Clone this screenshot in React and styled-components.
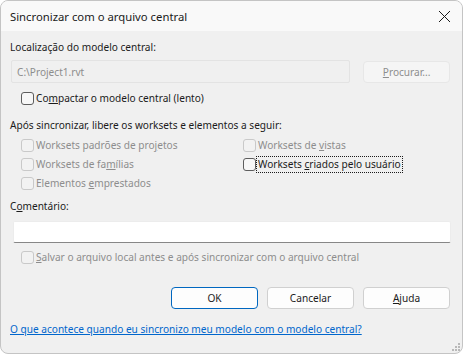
import React from 'react';
import styled, { createGlobalStyle } from 'styled-components';

const GlobalStyle = createGlobalStyle`
  html, body {
    margin: 0;
    padding: 0;
    background: #ffffff;
  }
  body {
    font-family: "Noto Sans", "Liberation Sans", sans-serif;
    font-size: 10.1px;
    color: #1b1b1b;
  }
`;

const Window = styled.div`
  box-sizing: border-box;
  width: 463px;
  height: 354px;
  border: 1px solid #c4c4c4;
  border-radius: 8px;
  overflow: hidden;
  background: #f0f0f0;
  display: flex;
  flex-direction: column;
  position: relative;
`;

const TitleBar = styled.div`
  height: 30px;
  background: #f9f9f9;
  display: flex;
  align-items: center;
  justify-content: space-between;
  padding: 0 9px 0 9px;
  flex-shrink: 0;
`;

const Title = styled.span`
  font-size: 11.3px;
  color: #1b1b1b;
`;

const CloseButton = styled.div`
  width: 16px;
  height: 16px;
  display: flex;
  align-items: center;
  justify-content: center;
  margin-right: 1px;
`;

const Body = styled.div`
  flex: 1;
  display: flex;
  flex-direction: column;
  padding: 9px 12px 0 9px;
`;

const Label = styled.div`
  line-height: 15px;
  color: ${p => (p.$disabled ? '#8d8d8d' : '#1b1b1b')};
  margin-top: ${p => p.$top || 0}px;
`;

const PathRow = styled.div`
  display: flex;
  align-items: center;
  gap: 13px;
  margin-top: 5px;
`;

const PathInput = styled.div`
  box-sizing: border-box;
  width: 340px;
  height: 23px;
  margin-left: 1px;
  border: 1px solid #e3e3e3;
  border-radius: 2px;
  background: #f0f0f0;
  color: #8d8d8d;
  display: flex;
  align-items: center;
  padding-left: 5px;
`;

const Button = styled.button`
  box-sizing: border-box;
  width: 87px;
  height: 22px;
  border-radius: 4px;
  border: 1px solid ${p => (p.$primary ? '#0067c0' : p.$disabled ? '#e7e7e7' : '#d0d0d0')};
  background: ${p => (p.$disabled ? '#f5f5f5' : '#fdfdfd')};
  color: ${p => (p.$disabled ? '#8d8d8d' : '#1b1b1b')};
  font-family: inherit;
  font-size: 10.1px;
  padding: 0;
  display: flex;
  align-items: center;
  justify-content: center;
`;

const Check = styled.label`
  display: flex;
  align-items: center;
  gap: 1px;
  height: 19px;
  color: ${p => (p.$disabled ? '#8d8d8d' : '#1b1b1b')};
`;

const Box = styled.span`
  box-sizing: border-box;
  width: 13px;
  height: 13px;
  border-radius: 3px;
  border: 1px solid ${p => (p.$disabled ? '#c9c9c9' : '#5d5d5d')};
  background: ${p => (p.$disabled ? '#f2f2f2' : '#f7f7f7')};
  flex-shrink: 0;
`;

const CheckText = styled.span`
  line-height: 15px;
  padding: 0 1px;
  outline: ${p => (p.$focus ? '1px dotted #1b1b1b' : 'none')};
  outline-offset: 0;
`;

const Indented = styled.div`
  padding-left: 11px;
  margin-top: ${p => p.$top || 0}px;
`;

const WorksetGrid = styled.div`
  display: grid;
  grid-template-columns: 222px 1fr;
  padding-left: 11px;
  margin-top: 3px;
`;

const CommentBox = styled.div`
  box-sizing: border-box;
  height: 22px;
  margin: 7px -1px 0 3px;
  background: #ffffff;
  border: 1px solid #ececec;
  border-bottom: 1px solid #878787;
  border-radius: 2px;
`;

const ButtonRow = styled.div`
  display: flex;
  justify-content: flex-end;
  gap: 9px;
  margin-top: 20px;
`;

const HelpLink = styled.a`
  color: #0066cc;
  text-decoration: underline;
  margin-top: 13px;
  line-height: 15px;
  cursor: pointer;
`;

const Grip = styled.svg`
  position: absolute;
  right: 2px;
  bottom: 2px;
`;

const U = styled.span`
  text-decoration: underline;
`;

const CheckItem = ({ disabled, focus, children }) => (
  <Check $disabled={disabled}>
    <Box $disabled={disabled} />
    <CheckText $focus={focus}>{children}</CheckText>
  </Check>
);

export default function App() {
  return (
    <>
      <GlobalStyle />
      <Window>
        <TitleBar>
          <Title>Sincronizar com o arquivo central</Title>
          <CloseButton>
            <svg width="13" height="13" viewBox="0 0 13 13">
              <path d="M1 1 L12 12 M12 1 L1 12" stroke="#1b1b1b" strokeWidth="1" fill="none" />
            </svg>
          </CloseButton>
        </TitleBar>
        <Body>
          <Label>Localização do modelo central:</Label>
          <PathRow>
            <PathInput>C:\Project1.rvt</PathInput>
            <Button $disabled>
              <span><U>P</U>rocurar...</span>
            </Button>
          </PathRow>
          <Indented $top={6}>
            <CheckItem>
              Co<U>m</U>pactar o modelo central (lento)
            </CheckItem>
          </Indented>
          <Label $top={10}>Após sincronizar, libere os worksets e elementos a seguir:</Label>
          <WorksetGrid>
            <CheckItem disabled>
              Worksets padrões de pro<U>j</U>etos
            </CheckItem>
            <CheckItem disabled>
              Worksets de <U>v</U>istas
            </CheckItem>
            <CheckItem disabled>
              Worksets de fa<U>m</U>ílias
            </CheckItem>
            <CheckItem focus>
              Worksets <U>c</U>riados pelo usuário
            </CheckItem>
            <CheckItem disabled>
              Elementos <U>e</U>mprestados
            </CheckItem>
          </WorksetGrid>
          <Label $top={6}>
            C<U>o</U>mentário:
          </Label>
          <CommentBox />
          <Indented $top={5}>
            <CheckItem disabled>
              <U>S</U>alvar o arquivo local antes e após sincronizar com o arquivo central
            </CheckItem>
          </Indented>
          <ButtonRow>
            <Button $primary>OK</Button>
            <Button>Cancelar</Button>
            <Button>
              <span><U>A</U>juda</span>
            </Button>
          </ButtonRow>
          <HelpLink>O que acontece quando eu sincronizo meu modelo com o modelo central?</HelpLink>
        </Body>
        <Grip width="8" height="8" viewBox="0 0 8 8">
          {[[6, 0], [6, 3], [3, 3], [6, 6], [3, 6], [0, 6]].map(([x, y], i) => (
            <rect key={i} x={x} y={y} width="2" height="2" fill="#b8b8b8" />
          ))}
        </Grip>
      </Window>
    </>
  );
}
